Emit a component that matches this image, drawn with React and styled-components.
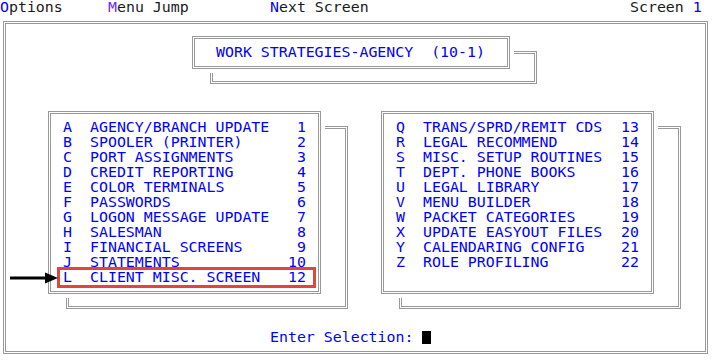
import React from "react";
import styled, { createGlobalStyle } from "styled-components";

const Global = createGlobalStyle`
  html, body { margin: 0; padding: 0; background: #ffffff; }
  body { font-family: "DejaVu Sans Mono", "Liberation Mono", monospace; }
`;

const BLUE = "#0000ff";
const DARK = "#1a1a1a";
const LINE = "#999999";

const Screen = styled.div`
  display: grid;
  grid-template-columns: repeat(80, 9px);
  grid-template-rows: repeat(24, 15px);
  width: 715px;
  height: 360px;
  overflow: hidden;
  font-family: "DejaVu Sans Mono", "Liberation Mono", monospace;
  font-size: 14.9px;
  line-height: 15px;
  color: ${BLUE};
  white-space: pre;
`;

const MenuItem = styled.div`
  grid-row: 1;
  grid-column: ${(p) => p.$col + 1} / span ${(p) => p.$span};
  color: ${DARK};
`;

const Hot = styled.span`
  color: ${(p) => p.$color || BLUE};
`;

const Frame = styled.div`
  grid-column: ${(p) => p.$c1 + 1} / ${(p) => p.$c2 + 2};
  grid-row: ${(p) => p.$r1 + 1} / ${(p) => p.$r2 + 2};
  margin: 6px 3px;
  border: 3px double ${LINE};
  box-sizing: border-box;
  z-index: ${(p) => p.$z || 1};
`;

const Box = styled(Frame)`
  background: #ffffff;
  box-shadow: 0 0 0 4px #ffffff;
  padding: ${(p) => p.$pad};
  display: flex;
  flex-direction: column;
`;

const Title = styled.div`
  color: ${BLUE};
`;

const Row = styled.div`
  position: relative;
  display: grid;
  grid-template-columns: 27px 198px 18px;
  width: 243px;
  height: 15px;
  &::after {
    content: "";
    display: ${(p) => (p.$marked ? "block" : "none")};
    position: absolute;
    left: -6px;
    right: -10px;
    top: -3px;
    bottom: -3px;
    border: 3px solid #e5443a;
  }
`;

const Num = styled.span`
  text-align: right;
`;

const Prompt = styled.div`
  grid-row: 23;
  grid-column: 31 / span 20;
  display: flex;
  align-items: center;
`;

const Cursor = styled.span`
  display: inline-block;
  width: 9px;
  height: 13px;
  background: #000;
`;

const ArrowCell = styled.div`
  grid-row: 19;
  grid-column: 1 / span 7;
  z-index: 5;
  display: flex;
  align-items: center;
  padding-left: 10px;
`;

const leftItems = [
  ["A", "AGENCY/BRANCH UPDATE", "1"],
  ["B", "SPOOLER (PRINTER)", "2"],
  ["C", "PORT ASSIGNMENTS", "3"],
  ["D", "CREDIT REPORTING", "4"],
  ["E", "COLOR TERMINALS", "5"],
  ["F", "PASSWORDS", "6"],
  ["G", "LOGON MESSAGE UPDATE", "7"],
  ["H", "SALESMAN", "8"],
  ["I", "FINANCIAL SCREENS", "9"],
  ["J", "STATEMENTS", "10"],
  ["L", "CLIENT MISC. SCREEN", "12", true],
];

const rightItems = [
  ["Q", "TRANS/SPRD/REMIT CDS", "13"],
  ["R", "LEGAL RECOMMEND", "14"],
  ["S", "MISC. SETUP ROUTINES", "15"],
  ["T", "DEPT. PHONE BOOKS", "16"],
  ["U", "LEGAL LIBRARY", "17"],
  ["V", "MENU BUILDER", "18"],
  ["W", "PACKET CATEGORIES", "19"],
  ["X", "UPDATE EASYOUT FILES", "20"],
  ["Y", "CALENDARING CONFIG", "21"],
  ["Z", "ROLE PROFILING", "22"],
];

const MenuList = ({ items }) =>
  items.map(([k, label, n, marked]) => (
    <Row key={k} $marked={marked}>
      <span>{k}</span>
      <span>{label}</span>
      <Num>{n}</Num>
    </Row>
  ));

export default function App() {
  return (
    <>
      <Global />
      <Screen>
        <MenuItem $col={0} $span={8}>
          <Hot>O</Hot>ptions
        </MenuItem>
        <MenuItem $col={12} $span={10}>
          <Hot $color="#6d28ff">M</Hot>enu Jump
        </MenuItem>
        <MenuItem $col={30} $span={12}>
          <Hot>N</Hot>ext Screen
        </MenuItem>
        <MenuItem $col={70} $span={9}>
          Screen <Hot>1</Hot>
        </MenuItem>

        <Frame $c1={0} $c2={78} $r1={1} $r2={23} />

        <Frame $c1={23} $c2={59} $r1={3} $r2={5} $z={2} />
        <Box $c1={21} $c2={56} $r1={2} $r2={4} $z={3} $pad="6px 0 0 21px">
          <Title>WORK STRATEGIES-AGENCY  (10-1)</Title>
        </Box>

        <Frame $c1={7} $c2={38} $r1={8} $r2={20} $z={2} />
        <Box $c1={5} $c2={35} $r1={7} $r2={19} $z={3} $pad="6px 0 0 12px">
          <MenuList items={leftItems} />
        </Box>

        <Frame $c1={44} $c2={75} $r1={8} $r2={20} $z={2} />
        <Box $c1={42} $c2={72} $r1={7} $r2={19} $z={3} $pad="6px 0 0 12px">
          <MenuList items={rightItems} />
        </Box>

        <Prompt>
          Enter Selection: <Cursor />
        </Prompt>

        <ArrowCell>
          <svg width="48" height="14" viewBox="0 0 48 14">
            <line x1="0" y1="7" x2="38" y2="7" stroke="#000" strokeWidth="3" />
            <polygon points="35,1.5 48,7 35,12.5" fill="#000" />
          </svg>
        </ArrowCell>
      </Screen>
    </>
  );
}
